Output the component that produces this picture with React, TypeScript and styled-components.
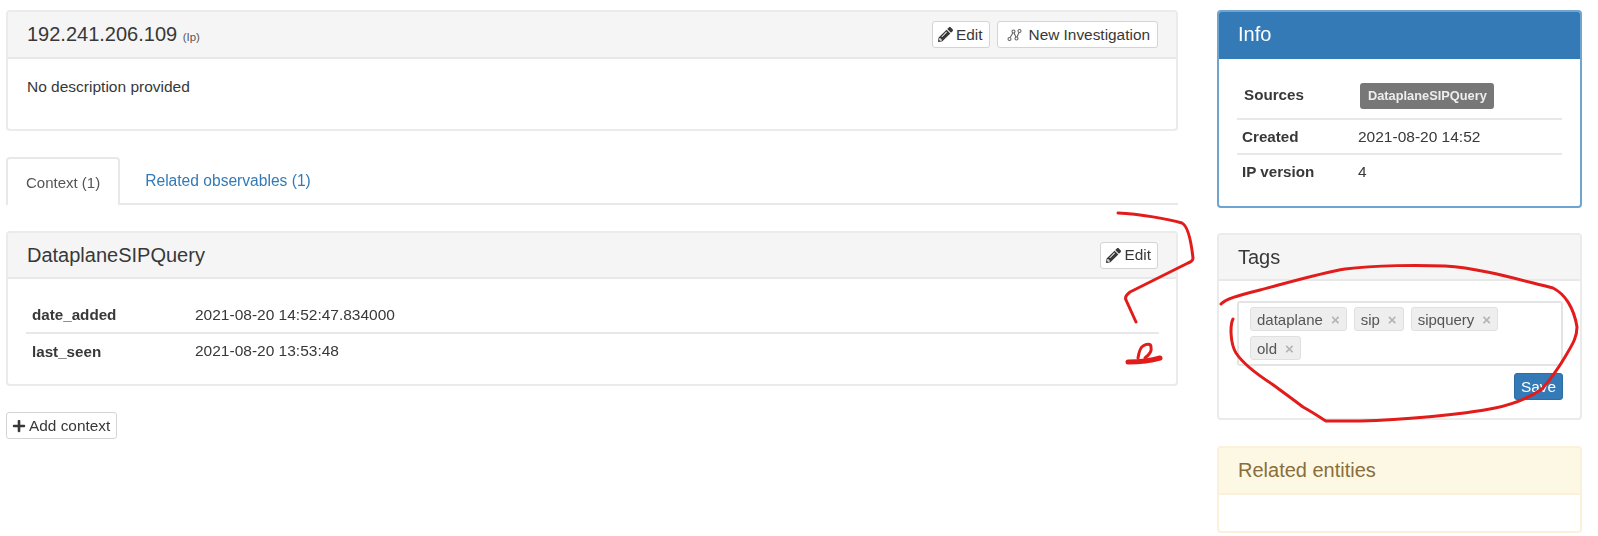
import React from 'react';
import styled, { createGlobalStyle } from 'styled-components';
import { FaPencilAlt, FaPlus } from 'react-icons/fa';

type Variant = 'default' | 'primary' | 'warning';

const borderColors: Record<Variant, string> = {
  default: '#ebebeb',
  primary: '#6fa3d0',
  warning: '#fbf0da',
};

const GlobalStyle = createGlobalStyle`
  html, body {
    margin: 0;
    padding: 0;
    background: #fff;
  }
  body {
    font-family: "Liberation Sans", Arial, sans-serif;
    font-size: 15.5px;
    color: #383838;
  }
`;

const Page = styled.div`
  position: relative;
  width: 1598px;
  height: 536px;
  overflow: hidden;
  box-sizing: border-box;
  padding: 10px 16px 0 6px;
  display: grid;
  grid-template-columns: 1172px 365px;
  column-gap: 39px;
  align-items: start;
  filter: blur(0.4px);
`;

const Column = styled.div`
  display: flex;
  flex-direction: column;
`;

const Panel = styled.section<{ $variant?: Variant; $height: number; $mb?: number }>`
  box-sizing: border-box;
  height: ${({ $height }) => $height}px;
  margin-bottom: ${({ $mb }) => $mb ?? 0}px;
  background: #fff;
  border-radius: 4px;
  border: 2px solid ${({ $variant }) => borderColors[$variant ?? 'default']};
  overflow: hidden;
`;

const PanelHeader = styled.header<{ $variant?: Variant; $height?: number }>`
  box-sizing: border-box;
  height: ${({ $height }) => $height ?? 47}px;
  display: flex;
  align-items: center;
  justify-content: space-between;
  padding: 0 18px 0 19px;
  font-size: 20px;
  color: ${({ $variant }) =>
    $variant === 'primary' ? '#fff' : $variant === 'warning' ? '#8a6d3b' : '#383838'};
  background: ${({ $variant }) =>
    $variant === 'primary' ? '#337ab7' : $variant === 'warning' ? '#fcf8e3' : '#f5f5f5'};
  border-bottom: 2px solid
    ${({ $variant }) =>
      $variant === 'primary' ? '#337ab7' : $variant === 'warning' ? '#fbf0da' : '#e8e8e8'};
`;

const Title = styled.span`
  font-size: 20px;
  small {
    font-size: 11.5px;
    color: #555;
  }
`;

const HeaderActions = styled.div`
  display: flex;
  gap: 7px;
`;

const Button = styled.button`
  box-sizing: border-box;
  height: 27px;
  display: inline-flex;
  align-items: center;
  gap: 3px;
  padding: 0 6px 0 5px;
  font-family: inherit;
  font-size: 15.4px;
  color: #383838;
  background: #fff;
  border: 1px solid #d4d4d4;
  border-radius: 3px;
  svg {
    flex: none;
  }
`;

const WideButton = styled(Button)`
  gap: 7px;
  padding: 0 7px 0 9px;
`;

const PanelBody = styled.div<{ $padding: string }>`
  padding: ${({ $padding }) => $padding};
`;

const Tabs = styled.nav`
  box-sizing: border-box;
  height: 48px;
  display: flex;
  margin-bottom: 26px;
  border-bottom: 2px solid #e8e8e8;
`;

const Tab = styled.a<{ $active?: boolean }>`
  box-sizing: border-box;
  height: ${({ $active }) => ($active ? 48 : 46)}px;
  display: flex;
  align-items: center;
  padding: 0 ${({ $active }) => ($active ? 18 : 23)}px;
  font-size: ${({ $active }) => ($active ? 15 : 15.6)}px;
  color: ${({ $active }) => ($active ? '#555' : '#337ab7')};
  background: ${({ $active }) => ($active ? '#fff' : 'transparent')};
  border: 2px solid ${({ $active }) => ($active ? '#e8e8e8' : 'transparent')};
  border-bottom: 0;
  border-radius: 4px 4px 0 0;
`;

const KeyValues = styled.dl<{ $labelWidth: number }>`
  margin: 0;
  display: grid;
  grid-template-columns: ${({ $labelWidth }) => $labelWidth}px 1fr;
`;

const Key = styled.dt<{ $h: number; $first?: boolean; $indent?: number }>`
  box-sizing: border-box;
  height: ${({ $h }) => $h}px;
  margin: 0;
  display: flex;
  align-items: center;
  font-size: 15.2px;
  font-weight: 700;
  padding-left: ${({ $indent }) => $indent ?? 5}px;
  border-top: ${({ $first }) => ($first ? '0' : '2px solid #e8e8e8')};
`;

const Value = styled.dd<{ $h: number; $first?: boolean }>`
  box-sizing: border-box;
  height: ${({ $h }) => $h}px;
  margin: 0;
  display: flex;
  align-items: center;
  border-top: ${({ $first }) => ($first ? '0' : '2px solid #e8e8e8')};
`;

const SourceLabel = styled.span`
  display: inline-block;
  box-sizing: border-box;
  height: 26px;
  line-height: 26px;
  padding: 0 7px 0 8px;
  margin: 4px 0 0 2px;
  font-size: 12.8px;
  font-weight: 700;
  color: #eee;
  background: #777;
  border-radius: 3px;
`;

const TagBox = styled.div`
  box-sizing: border-box;
  height: 65px;
  display: flex;
  flex-wrap: wrap;
  align-content: flex-start;
  gap: 5px 7px;
  padding: 4px 60px 4px 11px;
  border: 2px solid #e4e4e4;
  border-radius: 3px;
`;

const TagChip = styled.span`
  box-sizing: border-box;
  height: 24px;
  display: inline-flex;
  align-items: center;
  gap: 8px;
  padding: 0 6px;
  font-size: 15px;
  color: #555;
  background: #eee;
  border: 1px solid #e0e0e0;
  border-radius: 3px;
  i {
    font-style: normal;
    font-size: 15px;
    font-weight: 700;
    color: #b4b4b4;
  }
`;

const SaveRow = styled.div`
  display: flex;
  justify-content: flex-end;
  margin-top: 7px;
`;

const SaveButton = styled.button`
  box-sizing: border-box;
  width: 49px;
  height: 27px;
  font-family: inherit;
  font-size: 15.4px;
  color: #fff;
  background: #337ab7;
  border: 1px solid #2e6da4;
  border-radius: 3px;
  padding: 0;
`;

const Scribble = styled.svg`
  position: absolute;
  left: 0;
  top: 0;
  pointer-events: none;
`;

const InvestigationIcon = () => (
  <svg width="15" height="14" viewBox="0 0 15 14" fill="none" stroke="#666" strokeWidth="1.1">
    <circle cx="2.5" cy="11" r="1.5" />
    <circle cx="6.5" cy="3.5" r="1.5" />
    <circle cx="9.5" cy="10.5" r="1.5" />
    <circle cx="12.5" cy="3" r="1.5" />
    <path d="M3.2 9.6 5.8 4.9M7.1 5 8.9 9M10 9 12 4.5" />
  </svg>
);

const contextRows = [
  { key: 'date_added', value: '2021-08-20 14:52:47.834000', h: 35 },
  { key: 'last_seen', value: '2021-08-20 13:53:48', h: 36 },
];

const infoRows = [
  { key: 'Created', value: '2021-08-20 14:52', h: 35 },
  { key: 'IP version', value: '4', h: 35 },
];

const tags = ['dataplane', 'sip', 'sipquery', 'old'];

export default function App() {
  return (
    <Page>
      <GlobalStyle />
      <Column>
        <Panel $height={121} $mb={26}>
          <PanelHeader>
            <Title>
              192.241.206.109 <small>(Ip)</small>
            </Title>
            <HeaderActions>
              <Button>
                <FaPencilAlt size={15} />
                Edit
              </Button>
              <WideButton>
                <InvestigationIcon />
                New Investigation
              </WideButton>
            </HeaderActions>
          </PanelHeader>
          <PanelBody $padding="19px">No description provided</PanelBody>
        </Panel>

        <Tabs>
          <Tab $active>Context (1)</Tab>
          <Tab>Related observables (1)</Tab>
        </Tabs>

        <Panel $height={155} $mb={26}>
          <PanelHeader $height={46}>
            <Title>DataplaneSIPQuery</Title>
            <Button>
              <FaPencilAlt size={15} />
              Edit
            </Button>
          </PanelHeader>
          <PanelBody $padding="18px 17px 0 18px">
            <KeyValues $labelWidth={169}>
              {contextRows.map((row, i) => (
                <React.Fragment key={row.key}>
                  <Key $h={row.h} $first={i === 0} $indent={6}>
                    {row.key}
                  </Key>
                  <Value $h={row.h} $first={i === 0}>
                    {row.value}
                  </Value>
                </React.Fragment>
              ))}
            </KeyValues>
          </PanelBody>
        </Panel>

        <div>
          <Button>
            <FaPlus size={14} />
            Add context
          </Button>
        </div>
      </Column>

      <Column>
        <Panel $variant="primary" $height={198} $mb={25}>
          <PanelHeader $variant="primary">Info</PanelHeader>
          <PanelBody $padding="11px 18px 0">
            <KeyValues $labelWidth={121}>
              <Key $h={48} $first $indent={7}>
                Sources
              </Key>
              <Value $h={48} $first>
                <SourceLabel>DataplaneSIPQuery</SourceLabel>
              </Value>
              {infoRows.map((row) => (
                <React.Fragment key={row.key}>
                  <Key $h={row.h}>{row.key}</Key>
                  <Value $h={row.h}>{row.value}</Value>
                </React.Fragment>
              ))}
            </KeyValues>
          </PanelBody>
        </Panel>

        <Panel $height={187} $mb={26}>
          <PanelHeader $height={46}>Tags</PanelHeader>
          <PanelBody $padding="20px 17px 0 18px">
            <TagBox>
              {tags.map((tag) => (
                <TagChip key={tag}>
                  {tag}
                  <i>×</i>
                </TagChip>
              ))}
            </TagBox>
            <SaveRow>
              <SaveButton>Save</SaveButton>
            </SaveRow>
          </PanelBody>
        </Panel>

        <Panel $variant="warning" $height={87}>
          <PanelHeader $variant="warning">Related entities</PanelHeader>
        </Panel>
      </Column>

      <Scribble width="1598" height="536" viewBox="0 0 1598 536" fill="none" stroke="#e21b1b" strokeWidth="3" strokeLinecap="round" strokeLinejoin="round">
        <path d="M1118 213 C1140 214 1168 219 1182 223 C1188 226 1191 240 1193 258 C1193 261 1191 262 1188 263 L1130 292 C1126 295 1125 298 1126 300 L1136 322" />
        <path d="M1138 358 C1139 352 1141 347 1143 346 C1146 344 1151 343 1151 347 C1152 351 1149 355 1145 358" />
        <path d="M1128 362 C1138 362 1150 361 1160 358" strokeWidth="5" />
        <path d="M1221 304 C1226 299 1236 296 1260 290 C1290 282 1325 272 1345 269 C1375 265 1420 265 1445 266 C1480 268 1520 280 1553 288 C1565 294 1574 308 1577 327 C1577 338 1572 345 1565 357 C1556 372 1550 380 1542 389 C1532 396 1518 403 1495 408 C1460 415 1400 420 1360 421 L1326 421 C1318 416 1312 412 1303 407 C1290 397 1280 390 1272 384 C1258 375 1244 365 1236 353 C1230 343 1230 325 1233 319" />
      </Scribble>
    </Page>
  );
}
